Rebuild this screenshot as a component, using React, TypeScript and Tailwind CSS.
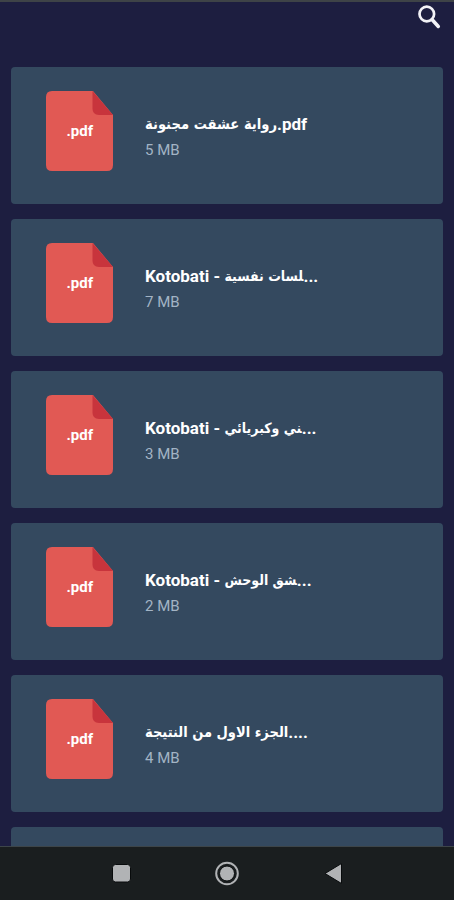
type Book = { latin: string; arabic: string; suffix: string; size: string; arabicClass: string };

const books: Book[] = [
  { latin: "", arabic: "رواية عشقت مجنونة", suffix: ".pdf", size: "5 MB", arabicClass: "text-[14.6px]" },
  { latin: "Kotobati - ", arabic: "\u200Dلسات نفسية", suffix: "...", size: "7 MB", arabicClass: "text-[14px]" },
  { latin: "Kotobati - ", arabic: "\u200Dني وكبريائي", suffix: "...", size: "3 MB", arabicClass: "text-[14px]" },
  { latin: "Kotobati - ", arabic: "\u200Dشق الوحش", suffix: "...", size: "2 MB", arabicClass: "text-[14px]" },
  { latin: "", arabic: "الجزء الاول من النتيجة", suffix: "....", size: "4 MB", arabicClass: "text-[14.5px]" },
];

function PdfIcon() {
  return (
    <svg className="block h-20 w-[67px] shrink-0" viewBox="0 0 67 80">
      <path d="M6 0H47L67 24V74Q67 80 61 80H6Q0 80 0 74V6Q0 0 6 0Z" fill="#e15954" />
      <path d="M46.500 0L67 24H53Q46.500 24 46.500 17.500Z" fill="#c8343c" />
      <text x="20.500" y="44.500" fill="#fff" fontFamily="Roboto, sans-serif" fontWeight="700" fontSize="15" textLength="26.500">
        .pdf
      </text>
    </svg>
  );
}

function BookCard({ book }: { book: Book }) {
  return (
    <div className="flex h-[137px] shrink-0 items-start rounded-[4px] bg-[#34495f] pl-[35px] pt-6">
      <PdfIcon />
      <div className="ml-8 pt-[21px]">
        <div dir="ltr" className="flex h-6 items-center whitespace-pre text-[17px] font-bold leading-6 text-white">
          {book.latin && <span>{book.latin}</span>}
          <span dir="rtl" className={`font-['DejaVu_Sans_Condensed','DejaVu_Sans',sans-serif] ${book.arabicClass}`}>{book.arabic}</span>
          <span>{book.suffix}</span>
        </div>
        <div className="mt-1 text-[15px] leading-5 text-[#a3b4c5]">{book.size}</div>
      </div>
    </div>
  );
}

export default function App() {
  return (
    <div className="flex h-[900px] w-full flex-col overflow-hidden bg-[#1d1e40] font-[Roboto,'DejaVu_Sans',sans-serif]">
      <div className="h-[2px] shrink-0 bg-[#3e4347]" />
      <header className="flex h-[65px] shrink-0 justify-end pr-[13px] pt-[3px]">
        <svg className="h-6 w-6" viewBox="0 0 24 24" fill="none" stroke="#f2f2f6">
          <circle cx="9.800" cy="9" r="7.300" strokeWidth="2.700" />
          <path d="M15 14.500L21.300 21.500" strokeWidth="3.500" strokeLinecap="round" />
        </svg>
      </header>
      <main className="flex min-h-0 flex-1 flex-col gap-[15px] overflow-hidden pl-[11px] pr-[11px]">
        {books.map((book) => (
          <BookCard key={book.size} book={book} />
        ))}
        <div className="h-[137px] shrink-0 rounded-[4px] bg-[#34495f]" />
      </main>
      <nav className="flex h-[54px] shrink-0 justify-center border-t border-[#3d4549] bg-[#1a1e1f]">
        <svg className="h-[52px] w-[250px]" viewBox="102 847 250 52">
          <rect x="112.500" y="864.500" width="18" height="17.500" rx="3" fill="#b1b3b5" stroke="#080b0c" />
          <circle cx="227" cy="873.500" r="10.800" fill="none" stroke="#b1b3b5" strokeWidth="2" />
          <circle cx="227" cy="873.500" r="7.500" fill="#b1b3b5" stroke="#080b0c" />
          <path d="M325 873.500L341.500 863.500V883.500Z" fill="#b1b3b5" stroke="#080b0c" strokeLinejoin="round" />
        </svg>
      </nav>
    </div>
  );
}
